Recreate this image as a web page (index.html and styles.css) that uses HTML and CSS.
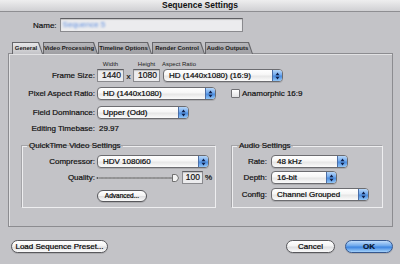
FILE: index.html
```html
<!DOCTYPE html>
<html>
<head>
<meta charset="utf-8">
<link rel="stylesheet" href="styles.css">
</head>
<body>
<div class="window">
  <div class="titlebar">Sequence Settings</div>

  <div class="name-row">
    <label class="name-label">Name:</label>
    <div class="field name-field"><span class="blurred">Sequence 5</span></div>
  </div>

  <div class="tabs">
    <div class="tab tab-sel t-general"><span>General</span></div>
    <div class="tab t-video"><span>Video Processing</span></div>
    <div class="tab t-timeline"><span>Timeline Options</span></div>
    <div class="tab t-render"><span>Render Control</span></div>
    <div class="tab t-audio"><span>Audio Outputs</span></div>
  </div>

  <div class="panel">
    <div class="row row-heads">
      <span class="lbl"></span>
      <span class="ch ch-num">Width</span>
      <span class="ch ch-x"></span>
      <span class="ch ch-num">Height</span>
      <span class="ch ch-ar">Aspect Ratio</span>
    </div>
    <div class="row row-fs">
      <label class="lbl">Frame Size:</label>
      <div class="field num-field">1440</div>
      <span class="times">x</span>
      <div class="field num-field">1080</div>
      <div class="popup w-aspect"><span class="val">HD (1440x1080) (16:9)</span><span class="cap"><svg width="5" height="8" viewBox="0 0 5 8"><path d="M0.5 3.2 L2.5 0.6 L4.5 3.2Z M0.5 4.8 L2.5 7.4 L4.5 4.8Z" fill="#10204a"/></svg></span></div>
    </div>
    <div class="row row-par">
      <label class="lbl">Pixel Aspect Ratio:</label>
      <div class="popup w-par"><span class="val">HD (1440x1080)</span><span class="cap"><svg width="5" height="8" viewBox="0 0 5 8"><path d="M0.5 3.2 L2.5 0.6 L4.5 3.2Z M0.5 4.8 L2.5 7.4 L4.5 4.8Z" fill="#10204a"/></svg></span></div>
      <span class="checkbox"></span>
      <span class="check-label">Anamorphic 16:9</span>
    </div>
    <div class="row row-fd">
      <label class="lbl">Field Dominance:</label>
      <div class="popup w-fd"><span class="val">Upper (Odd)</span><span class="cap"><svg width="5" height="8" viewBox="0 0 5 8"><path d="M0.5 3.2 L2.5 0.6 L4.5 3.2Z M0.5 4.8 L2.5 7.4 L4.5 4.8Z" fill="#10204a"/></svg></span></div>
    </div>
    <div class="row row-et">
      <label class="lbl">Editing Timebase:</label>
      <span class="et-val">29.97</span>
    </div>

    <div class="groups">
      <fieldset class="group g-qt">
        <legend>QuickTime Video Settings</legend>
        <div class="grow">
          <label class="glbl qt-lbl">Compressor:</label>
          <div class="popup w-comp"><span class="val">HDV 1080i60</span><span class="cap"><svg width="5" height="8" viewBox="0 0 5 8"><path d="M0.5 3.2 L2.5 0.6 L4.5 3.2Z M0.5 4.8 L2.5 7.4 L4.5 4.8Z" fill="#10204a"/></svg></span></div>
        </div>
        <div class="grow g-gap3">
          <label class="glbl qt-lbl">Quality:</label>
          <svg class="slider" width="84" height="10" viewBox="0 0 84 10">
            <circle cx="1.5" cy="5" r="1" fill="#555"/>
            <line x1="3" y1="5" x2="80" y2="5" stroke="#6a6a6a" stroke-width="1"/>
            <path d="M6 4v2M10 4v2M14 4v2M18 4v2M22 4v2M26 4v2M30 4v2M34 4v2M38 4v2M42 4v2M46 4v2M50 4v2M54 4v2M58 4v2M62 4v2M66 4v2M70 4v2M74 4v2" stroke="#8a8a8a" stroke-width="0.8"/>
            <path d="M76.5 1.5 h3 q2 0 3 3.5 q-1 3.5 -3 3.5 h-3z" fill="#f2f2f2" stroke="#555" stroke-width="0.8"/>
          </svg>
          <div class="field q-field">100</div>
          <span class="pct">%</span>
        </div>
        <div class="grow g-gap6">
          <button class="btn adv-btn">Advanced...</button>
        </div>
      </fieldset>

      <fieldset class="group g-audio">
        <legend>Audio Settings</legend>
        <div class="grow">
          <label class="glbl au-lbl">Rate:</label>
          <div class="popup w-rate"><span class="val">48 kHz</span><span class="cap"><svg width="5" height="8" viewBox="0 0 5 8"><path d="M0.5 3.2 L2.5 0.6 L4.5 3.2Z M0.5 4.8 L2.5 7.4 L4.5 4.8Z" fill="#10204a"/></svg></span></div>
        </div>
        <div class="grow g-gap3">
          <label class="glbl au-lbl">Depth:</label>
          <div class="popup w-depth"><span class="val">16-bit</span><span class="cap"><svg width="5" height="8" viewBox="0 0 5 8"><path d="M0.5 3.2 L2.5 0.6 L4.5 3.2Z M0.5 4.8 L2.5 7.4 L4.5 4.8Z" fill="#10204a"/></svg></span></div>
        </div>
        <div class="grow g-gap4">
          <label class="glbl au-lbl">Config:</label>
          <div class="popup w-config"><span class="val">Channel Grouped</span><span class="cap"><svg width="5" height="8" viewBox="0 0 5 8"><path d="M0.5 3.2 L2.5 0.6 L4.5 3.2Z M0.5 4.8 L2.5 7.4 L4.5 4.8Z" fill="#10204a"/></svg></span></div>
        </div>
      </fieldset>
    </div>
  </div>

  <div class="buttons">
    <button class="btn load-btn">Load Sequence Preset...</button>
    <div class="right-btns">
      <button class="btn cancel-btn">Cancel</button>
      <button class="btn ok-btn">OK</button>
    </div>
  </div>
</div>
</body>
</html>
```

FILE: styles.css
```css
html, body {
  margin: 0;
  padding: 0;
}

.window {
  width: 400px;
  height: 264px;
  overflow: hidden;
  background: #c3c3c7;
  font-family: "Liberation Sans", Arial, sans-serif;
  font-size: 8px;
  color: #111;
  -webkit-text-stroke: 0.2px #111;
}

.titlebar {
  height: 11px;
  line-height: 11px;
  text-align: center;
  font-weight: bold;
  font-size: 8.5px;
  color: #111;
  -webkit-text-stroke: 0;
  background: linear-gradient(#eeeeef, #d0d0d3);
  border-bottom: 1px solid #8e8e92;
}

/* name */
.name-row {
  display: flex;
  align-items: center;
  gap: 3px;
  height: 14px;
  margin-top: 6px;
  padding-left: 33px;
}
.name-label {
  font-size: 8px;
}
.field {
  box-sizing: border-box;
  border: 1px solid #8a8a8e;
  border-top-color: #5e5e62;
  background: #ececee;
  box-shadow: inset 0 1px 1px rgba(0, 0, 0, 0.18);
}
.name-field {
  width: 183px;
  height: 14px;
  padding-left: 2px;
  line-height: 12px;
}
.blurred {
  color: #5d8ee0;
  -webkit-text-stroke: 0;
  filter: blur(0.9px);
  font-size: 8px;
}

/* tabs */
.tabs {
  display: flex;
  height: 12px;
  margin-top: 10px;
  margin-bottom: -1px;
  padding-left: 12px;
  position: relative;
  z-index: 1;
}
.tab {
  position: relative;
  height: 12px;
  box-sizing: border-box;
  background: #66666a;
  clip-path: polygon(0 0, calc(100% - 4px) 0, 100% 100%, 0 100%);
  font-size: 6px;
  font-weight: bold;
  color: #1a1a1a;
  -webkit-text-stroke: 0;
  display: flex;
  align-items: center;
  justify-content: center;
  padding-right: 3px;
}
.tab::before {
  content: "";
  position: absolute;
  left: 1px;
  top: 1px;
  right: 1px;
  bottom: 0;
  background: linear-gradient(#b6b6ba, #9e9ea2);
  clip-path: polygon(0 0, calc(100% - 4px) 0, 100% 100%, 0 100%);
}
.tab span {
  position: relative;
}
.tab-sel::before {
  bottom: 0;
  background: linear-gradient(#e6e6e8, #c3c3c7);
}
.t-general { width: 31px; }
.t-video { width: 55px; }
.t-timeline { width: 54px; }
.t-render { width: 53px; }
.t-audio { width: 48px; }

/* panel */
.panel {
  box-sizing: border-box;
  height: 174px;
  margin: 0 7px 0 8px;
  border: 1px solid #8c8c90;
  box-shadow: inset 1px 1px 0 #e2e2e4;
}
.row {
  display: flex;
  align-items: center;
  height: 13px;
}
.lbl {
  width: 86px;
  margin-right: 2px;
  text-align: right;
  white-space: nowrap;
  flex: none;
}
.row-heads {
  height: 8px;
  margin-top: 6px;
}
.ch {
  font-size: 6px;
  color: #222;
  -webkit-text-stroke: 0;
  white-space: nowrap;
}
.ch-num {
  width: 27px;
  text-align: center;
}
.ch-x {
  width: 9px;
}
.ch-ar {
  margin-left: 2px;
}
.row-fs {
  margin-top: 1px;
}
.num-field {
  width: 27px;
  height: 13px;
  line-height: 11px;
  text-align: right;
  padding-right: 2px;
  font-size: 8.5px;
}
.times {
  width: 9px;
  text-align: center;
  font-size: 8px;
  padding-top: 2px;
}
.row-fs .popup {
  margin-left: 3px;
}
.row-par {
  margin-top: 5px;
}
.row-fd {
  margin-top: 6px;
}
.row-et {
  margin-top: 4px;
  height: 10px;
}
.et-val {
  margin-left: 2px;
}

/* popups */
.popup {
  display: flex;
  box-sizing: border-box;
  height: 13px;
  border: 1px solid #6c6c70;
  border-radius: 4px;
  overflow: hidden;
  background: linear-gradient(#ffffff 0%, #f6f6f6 45%, #e6e6e6 55%, #fbfbfb 100%);
  box-shadow: 0 1px 0 rgba(0, 0, 0, 0.12);
  flex: none;
}
.popup .val {
  flex: 1;
  padding-left: 5px;
  line-height: 11px;
  font-size: 8px;
  white-space: nowrap;
  overflow: hidden;
  color: #000;
}
.popup .cap {
  width: 9px;
  flex: none;
  display: flex;
  align-items: center;
  justify-content: center;
  border-left: 1px solid #4b6ea6;
  background: linear-gradient(#b6d6f8 0%, #72aaee 45%, #4a8ce0 55%, #93c6f6 100%);
}
.w-aspect { width: 120px; }
.w-par { width: 119px; }
.w-fd { width: 92px; }
.w-comp { width: 112px; }
.w-rate { width: 77px; }
.w-depth { width: 66px; }
.w-config { width: 98px; }

.checkbox {
  width: 7px;
  height: 7px;
  margin-left: 15px;
  border: 1px solid #707074;
  border-radius: 1px;
  background: linear-gradient(#ffffff, #e2e2e4);
  flex: none;
}
.check-label {
  margin-left: 2px;
  white-space: nowrap;
}

/* groups */
.groups {
  display: flex;
  gap: 16px;
  margin: 8px 0 0 13px;
}
.group {
  box-sizing: border-box;
  margin: 0;
  padding: 4px 0 5px 0;
  min-width: 0;
  border: 1px solid #eeeef0;
  box-shadow: -1px -1px 0 #a4a4a8;
}
.group legend {
  margin-left: 4px;
  padding: 0 2px;
  line-height: 10px;
  font-size: 8px;
}
.g-qt { width: 194px; }
.g-audio { width: 151px; }
.grow {
  display: flex;
  align-items: center;
  height: 13px;
}
.g-gap3 { margin-top: 3px; }
.g-gap4 { margin-top: 4px; }
.g-gap6 { margin-top: 6px; height: 12px; }
.glbl {
  text-align: right;
  white-space: nowrap;
  flex: none;
}
.qt-lbl {
  width: 72px;
  margin-right: 2px;
}
.au-lbl {
  width: 34px;
  margin-right: 4px;
}
.slider {
  margin-left: -1px;
  flex: none;
}
.q-field {
  width: 21px;
  height: 13px;
  margin-left: 2px;
  line-height: 11px;
  text-align: right;
  padding-right: 2px;
  font-size: 8.5px;
}
.pct {
  margin-left: 2px;
}

/* buttons */
.btn {
  box-sizing: border-box;
  height: 13px;
  padding: 0;
  margin: 0;
  border: 1px solid #58585c;
  border-radius: 7px;
  background: linear-gradient(#ffffff 0%, #f4f4f4 45%, #e0e0e2 55%, #fafafa 100%);
  font-family: "Liberation Sans", Arial, sans-serif;
  font-size: 8px;
  color: #000;
  -webkit-text-stroke: 0.2px #000;
  line-height: 11px;
  text-align: center;
  box-shadow: 0 1px 0 rgba(0, 0, 0, 0.12);
}
.adv-btn {
  width: 50px;
  height: 12px;
  margin-left: 74px;
  font-size: 6.5px;
  line-height: 10px;
}
.buttons {
  display: flex;
  justify-content: space-between;
  align-items: center;
  margin-top: 13px;
  padding: 0 7px 0 11px;
}
.right-btns {
  display: flex;
  gap: 10px;
}
.load-btn { width: 97px; }
.cancel-btn { width: 49px; }
.ok-btn {
  width: 48px;
  font-weight: bold;
  color: #0a1a3a;
  border-color: #35578e;
  background: linear-gradient(#c0dcfa 0%, #6aa6ec 45%, #3c84e0 55%, #a4d2fb 100%);
}
```
